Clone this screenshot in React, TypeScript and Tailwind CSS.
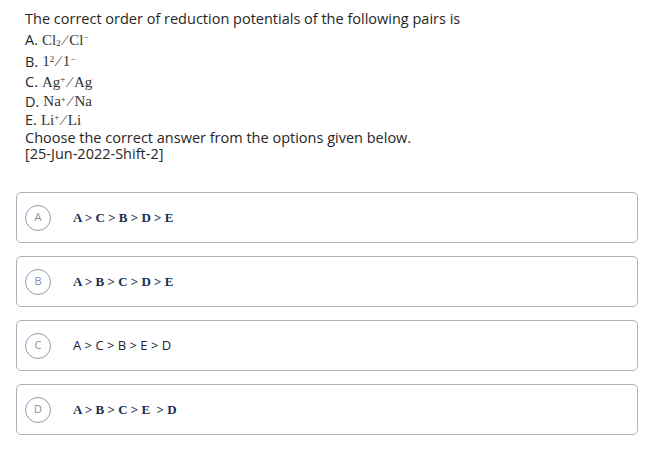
import React from 'react'

const options = [
  { key: 'A', text: 'A > C > B > D > E', serif: true },
  { key: 'B', text: 'A > B > C > D > E', serif: true },
  { key: 'C', text: 'A > C > B > E > D', serif: false },
  { key: 'D', text: 'A > B > C > E  > D', serif: true },
]

type PairProps = { label: string; a: string; sup?: string; sub?: string; b: string; bsup?: string; h: string }

function Pair({ label, a, sup, sub, b, bsup, h }: PairProps) {
  return (
    <div className={'flex items-center ' + h}>
      <span className="mr-[4px]">{label}</span>
      <span className="font-['Liberation_Serif',serif] text-[15px] text-[#333] leading-none">
        {a}
        {sub && <sub className="text-[9px] relative top-[1px]">{sub}</sub>}
        {sup && <sup className="text-[9px]">{sup}</sup>}
        <span className="mx-[3px]">∕</span>
        {b}
        {bsup && <sup className="text-[9px]">{bsup}</sup>}
      </span>
    </div>
  )
}

export default function App() {
  return (
    <div className="w-[650px] h-[450px] bg-white font-['Open_Sans',sans-serif] text-[#262626] overflow-hidden">
      <div className="pl-[25px] pt-[9px] text-[14.5px]">
        <div className="h-[20px] leading-[20px]">The correct order of reduction potentials of the following pairs is</div>
        <Pair label="A." a="Cl" sub="2" b="Cl" bsup="−" h="h-[22px]" />
        <Pair label="B." a="1" sup="2" b="1" bsup="−" h="h-[21px]" />
        <Pair label="C." a="Ag" sup="+" b="Ag" h="h-[20px]" />
        <Pair label="D." a="Na" sup="+" b="Na" h="h-[19px]" />
        <Pair label="E." a="Li" sup="+" b="Li" h="h-[18px]" />
        <div className="h-[17px] leading-[17px]">Choose the correct answer from the options given below.</div>
        <div className="h-[16px] leading-[16px]">[25-Jun-2022-Shift-2]</div>
      </div>
      <div className="flex flex-col gap-[13px] mt-[30px] ml-[16px] w-[622px]">
        {options.map((o) => (
          <div key={o.key} className="h-[51px] border border-[#aab2bb] rounded-[5px] flex items-center pl-[8px]">
            <div className="w-[26px] h-[26px] rounded-full border border-[#8c9bab] flex items-center justify-center text-[11px] text-[#8a8f96]">
              {o.key}
            </div>
            <div
              className={
                o.serif
                  ? "ml-[22px] font-['Liberation_Serif',serif] font-bold text-[13px] text-[#1c2d4d] whitespace-pre"
                  : "ml-[22px] text-[13px] text-[#1c2530] whitespace-pre"
              }
            >
              {o.text}
            </div>
          </div>
        ))}
      </div>
    </div>
  )
}
